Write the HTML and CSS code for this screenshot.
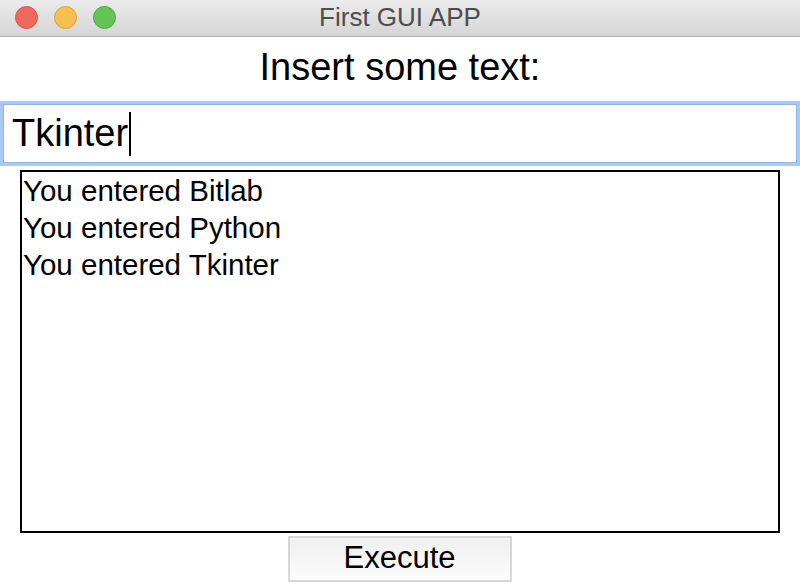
FILE: index.html
```html
<!DOCTYPE html>
<html>
<head>
<meta charset="utf-8">
<link rel="stylesheet" href="styles.css">
</head>
<body>
<div class="window">
  <div class="titlebar">
    <div class="lights">
      <span class="light red"></span>
      <span class="light yellow"></span>
      <span class="light green"></span>
    </div>
    <div class="title">First GUI APP</div>
  </div>
  <div class="label">Insert some text:</div>
  <div class="entry-ring">
    <div class="entry"><span class="entry-text">Tkinter</span><span class="caret"></span></div>
  </div>
  <div class="listbox">
    <div class="item">You entered Bitlab</div>
    <div class="item">You entered Python</div>
    <div class="item">You entered Tkinter</div>
  </div>
  <div class="btn-row">
    <div class="button">Execute</div>
  </div>
</div>
</body>
</html>
```

FILE: styles.css
```css
html, body {
  margin: 0;
  padding: 0;
  background: #ffffff;
}
.window {
  width: 800px;
  height: 584px;
  overflow: hidden;
  font-family: "Liberation Sans", Arial, sans-serif;
  color: #000;
  display: flex;
  flex-direction: column;
}
.titlebar {
  height: 36px;
  border-bottom: 1px solid #b1b1b1;
  background: linear-gradient(#ebebeb, #d5d5d5);
  display: flex;
  align-items: center;
  position: relative;
  flex-shrink: 0;
}
.lights {
  display: flex;
  gap: 16px;
  padding-left: 15px;
  margin-top: -2px;
}
.light {
  width: 23px;
  height: 23px;
  border-radius: 50%;
  box-sizing: border-box;
}
.red { background: #ee6a5f; border: 1px solid #d5544a; }
.yellow { background: #f6bf4f; border: 1px solid #dca23a; }
.green { background: #62c554; border: 1px solid #4ea73f; }
.title {
  position: absolute;
  left: 0;
  right: 0;
  top: 0;
  line-height: 34px;
  text-align: center;
  font-size: 26px;
  color: #4d4d4d;
  pointer-events: none;
}
.label {
  height: 64px;
  box-sizing: border-box;
  padding-bottom: 3px;
  line-height: 61px;
  text-align: center;
  font-size: 38px;
  flex-shrink: 0;
}
.entry-ring {
  height: 65px;
  box-sizing: border-box;
  border: 3px solid #a7c9f4;
  flex-shrink: 0;
}
.entry {
  height: 100%;
  box-sizing: border-box;
  border: 1px solid #8fb4e5;
  background: #fff;
  display: flex;
  align-items: center;
  padding-left: 8px;
}
.entry-text {
  font-size: 38px;
}
.caret {
  width: 2px;
  height: 44px;
  background: #000;
  margin-left: 1px;
}
.listbox {
  margin: 4px 20px 0 20px;
  height: 363px;
  box-sizing: border-box;
  border: 2px solid #000;
  padding: 0 0 0 1px;
  flex-shrink: 0;
}
.item {
  font-size: 29.5px;
  line-height: 37px;
  height: 37px;
}
.btn-row {
  display: flex;
  justify-content: center;
  padding-top: 3px;
  padding-right: 1px;
}
.button {
  width: 224px;
  height: 46px;
  box-sizing: border-box;
  border: 2px solid #d6d6d6;
  background: linear-gradient(#f0f0f0, #fbfbfb);
  font-size: 31px;
  line-height: 40px;
  text-align: center;
}
```
